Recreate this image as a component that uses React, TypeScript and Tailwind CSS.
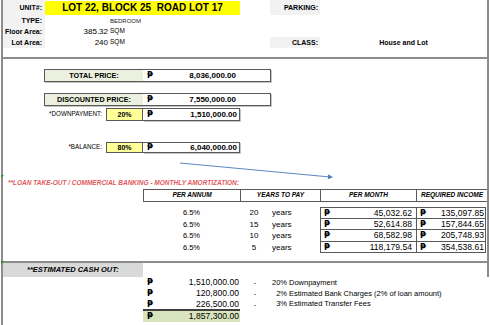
import type { ReactNode } from 'react'

function Peso() {
  return <span className="font-['DejaVu_Sans',sans-serif] text-[8.5px] font-bold">₱</span>
}

function Label({ children }: { children: ReactNode }) {
  return (
    <div className="flex w-[42px] items-center justify-end bg-[#f2f2f2] pr-[3px] text-[7px] font-bold">
      {children}
    </div>
  )
}

function TopSection() {
  return (
    <section className="h-[59px] border-r-2 border-b-2 border-[#8c8c8c]">
      <div className="flex h-[15px]">
        <Label>UNIT#:</Label>
        <div className="mt-px flex h-[14px] w-[195px] items-center justify-center bg-[#ffff00] text-[10px] font-bold whitespace-pre">
          LOT 22, BLOCK 25  ROAD LOT 17
        </div>
        <div className="w-[30px]" />
        <div className="flex w-[50px] items-center justify-end bg-[#f2f2f2] pr-[2px] text-[7px] font-bold">
          PARKING:
        </div>
      </div>
      <div className="flex h-[11px]">
        <Label>TYPE:</Label>
        <div className="w-[63px]" />
        <div className="flex items-center pl-[2px] text-[6px] text-[#222]">BEDROOM</div>
      </div>
      <div className="flex h-[11px]">
        <Label>Floor Area:</Label>
        <div className="flex w-[63px] items-center justify-end text-[8px]">385.32</div>
        <div className="flex items-center pl-[2px] text-[6.5px]">SQM</div>
      </div>
      <div className="flex h-[11px]">
        <Label>Lot Area:</Label>
        <div className="flex w-[63px] items-center justify-end text-[8px]">240</div>
        <div className="flex w-[132px] items-center pl-[2px] text-[6.5px]">SQM</div>
        <div className="w-[30px]" />
        <div className="flex w-[50px] items-center justify-end bg-[#f2f2f2] pr-[2px] text-[7px] font-bold">
          CLASS:
        </div>
        <div className="flex flex-1 items-center justify-center text-[7px] font-bold">House and Lot</div>
      </div>
    </section>
  )
}

function PriceBox({ label, amount, className = '' }: { label: string; amount: string; className?: string }) {
  return (
    <div className={`ml-[41px] flex h-[13px] w-[227px] border border-[#595959] shadow-[1px_1px_0_#c4c4c4] ${className}`}>
      <div className="flex w-[98px] items-center justify-center bg-[#ebf1de] text-[7.2px] font-bold">{label}</div>
      <div className="flex w-[97px] items-center justify-between pr-[4px] pl-[4px] text-[8px] font-bold">
        <Peso />
        {amount}
      </div>
    </div>
  )
}

function PercentRow({
  label,
  pct,
  amount,
  className,
}: {
  label: string
  pct: string
  amount: string
  className: string
}) {
  return (
    <div className={`flex ${className}`}>
      <div className="flex w-[103px] items-center justify-end pr-[4px] text-[6.3px]">{label}</div>
      <div className="flex w-[37px] items-center justify-center border border-[#595959] bg-[#ffff99] text-[7px] font-bold">
        {pct}
      </div>
      <div className="flex w-[97px] items-center justify-between border-y border-r border-[#595959] pr-[2px] pl-[4px] text-[8px] font-bold shadow-[1px_1px_0_#c4c4c4]">
        <Peso />
        {amount}
      </div>
    </div>
  )
}

const amortization = [
  { years: '20', month: '45,032.62', income: '135,097.85', h: 'h-[12px]' },
  { years: '15', month: '52,614.88', income: '157,844.65', h: 'h-[11px]' },
  { years: '10', month: '68,582.98', income: '205,748.93', h: 'h-[12px]' },
  { years: '5', month: '118,179.54', income: '354,538.61', h: 'h-[11px]' },
]

function PricingSection() {
  return (
    <section className="h-[204px] border-r-2 border-b-2 border-[#8c8c8c] pt-[10px]">
      <PriceBox label="TOTAL PRICE:" amount="8,036,000.00" />
      <PriceBox label="DISCOUNTED PRICE:" amount="7,550,000.00" className="mt-[11px]" />
      <PercentRow label="*DOWNPAYMENT:" pct="20%" amount="1,510,000.00" className="mt-[2px] h-[13px]" />
      <PercentRow label="*BALANCE:" pct="80%" amount="6,040,000.00" className="mt-[21px] h-[11px]" />

      <div className="mt-[25px] flex h-[10px] items-center pl-[5px] text-[6.5px] font-bold text-[#e0595b] italic">
        **LOAN TAKE-OUT / COMMERCIAL BANKING - MONTHLY AMORTIZATION:
      </div>

      <div className="mt-px flex h-[13px] text-[6.5px] font-bold italic">
        <div className="w-[140px]" />
        <div className="flex w-[97px] items-center justify-center border-y border-l border-[#595959]">PER ANNUM</div>
        <div className="flex w-[80px] items-center justify-center border-y border-l border-[#595959]">YEARS TO PAY</div>
        <div className="flex w-[96px] items-center justify-center border-y border-l border-[#595959]">PER MONTH</div>
        <div className="flex flex-1 items-center justify-center border-y border-l border-[#595959]">REQUIRED INCOME</div>
      </div>

      <div className="mt-[5px]">
        {amortization.map((row, i) => (
          <div key={row.years} className={`flex ${row.h}`}>
            <div className="w-[140px]" />
            <div className="flex w-[97px] items-center justify-center text-[7.5px]">6.5%</div>
            <div className="flex w-[28px] items-center justify-center text-[8px]">{row.years}</div>
            <div className="flex w-[52px] items-center pl-[4px] text-[8px]">years</div>
            <div
              className={`flex w-[96px] items-center justify-between border-b border-l border-[#595959] pr-[4px] pl-[3px] text-[8.6px] ${
                i === 0 ? 'border-t' : ''
              }`}
            >
              <Peso />
              {row.month}
            </div>
            <div
              className={`flex w-[70px] items-center justify-between border-x border-b border-[#595959] pr-px pl-[3px] text-[8.6px] ${
                i === 0 ? 'border-t' : ''
              }`}
            >
              <Peso />
              {row.income}
            </div>
          </div>
        ))}
      </div>
    </section>
  )
}

const cashOut = [
  { amount: '1,510,000.00', pct: '20%', note: 'Downpayment' },
  { amount: '120,800.00', pct: '2%', note: 'Estimated Bank Charges (2% of loan amount)' },
  { amount: '226,500.00', pct: '3%', note: 'Estimated Transfer Fees' },
]

function CashOut() {
  return (
    <section>
      <div className="flex h-[14px] border-r-2 border-[#8c8c8c]">
        <div className="flex w-[140px] items-center bg-[#d9d9d9] pl-[24px] text-[7.5px] font-bold italic">
          **ESTIMATED CASH OUT:
        </div>
      </div>
      {cashOut.map((row, i) => (
        <div key={row.pct} className={`flex ${i === 2 ? 'h-[10px]' : 'h-[11px]'}`}>
          <div className="w-[140px]" />
          <div className="flex w-[97px] items-center justify-between pr-px pl-[4px] text-[8.6px]">
            <Peso />
            {row.amount}
          </div>
          <div className="flex w-[30px] items-center justify-center text-[7px]">-</div>
          <div className="flex w-[17px] items-center justify-end text-[7.5px]">{row.pct}</div>
          <div className="flex items-center pl-[2px] text-[7.5px]">{row.note}</div>
        </div>
      ))}
      <div className="flex h-[13px]">
        <div className="w-[140px]" />
        <div className="flex w-[97px] items-center justify-between border-t-2 border-[#404040] bg-[#d7e4bd] pr-px pl-[4px] text-[8.6px]">
          <Peso />
          1,857,300.00
        </div>
      </div>
    </section>
  )
}

function Arrow() {
  return (
    <svg className="pointer-events-none absolute top-0 left-0" width="490" height="325" viewBox="0 0 490 325">
      <line x1="180" y1="163" x2="328" y2="176.8" stroke="#5b87c4" strokeWidth="1" />
      <polygon points="333,177.3 328.2,174.3 327.8,179.3" fill="#4a7ebb" />
    </svg>
  )
}

export default function App() {
  return (
    <div className="relative h-[325px] w-[490px] overflow-hidden bg-white font-['Liberation_Sans',Arial,sans-serif] leading-none text-black">
      <div className="ml-px h-full w-[488px] border-l-2 border-[#8c8c8c]">
        <TopSection />
        <PricingSection />
        <CashOut />
      </div>
      <Arrow />
      <span className="absolute top-[175px] left-[1px] h-[3px] w-[3px] bg-[#2e8b2e] [clip-path:polygon(0_0,100%_0,0_100%)]" />
      <span className="absolute top-[261px] left-[1px] h-[3px] w-[3px] bg-[#2e7d2e] [clip-path:polygon(0_0,100%_0,0_100%)]" />
    </div>
  )
}
